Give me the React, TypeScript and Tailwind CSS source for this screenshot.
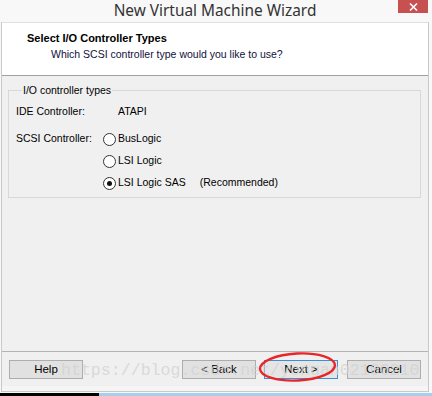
import React from "react";

function Radio({ checked, label }: { checked?: boolean; label: string }) {
  return (
    <div className="flex items-center">
      <div className="w-[13px] h-[13px] rounded-full border border-[#333333] bg-white flex items-center justify-center">
        {checked && <div className="w-[5px] h-[5px] rounded-full bg-[#111111]" />}
      </div>
      <span className="ml-[2px]">{label}</span>
    </div>
  );
}

function Btn({ children, primary }: { children: React.ReactNode; primary?: boolean }) {
  return (
    <div
      className={
        "w-[74px] h-[19px] flex items-center justify-center border text-[11.5px] text-black " +
        (primary ? "border-[#3c8fd9] bg-[#e5e5e5]" : "border-[#adadad] bg-[#e1e1e1]")
      }
    >
      {children}
    </div>
  );
}

export default function App() {
  return (
    <div
      className="relative w-[432px] h-[396px] bg-[#f8f8f8] overflow-hidden text-[10.5px] text-black"
      style={{ fontFamily: '"Liberation Sans", Arial, sans-serif' }}
    >
      {/* Title bar */}
      <div className="relative h-[22px] w-[430px] flex items-center justify-center">
        <span className="text-[15.4px] text-[#333333] leading-none" style={{ fontFamily: '"Noto Sans", "Liberation Sans", sans-serif' }}>
          New Virtual Machine Wizard
        </span>
        <div className="absolute right-[2px] top-0 w-[30px] h-[13px] bg-[#c75050] flex items-center justify-center">
          <svg width="9" height="8" viewBox="0 0 9 8">
            <path d="M1 0.5 L8 7.5 M8 0.5 L1 7.5" stroke="white" strokeWidth="1.6" />
          </svg>
        </div>
      </div>

      {/* Window content */}
      <div className="ml-[1px] w-[428px] border-x border-[#c9c9c9] flex flex-col">
        {/* Header */}
        <div className="h-[54px] bg-white border-t border-[#e0e0e0] border-b border-b-[#a0a0a0] pl-[25px] pt-[9px]">
          <div className="font-bold text-[11px] leading-[13px]">Select I/O Controller Types</div>
          <div className="pl-[24px] mt-[3px] leading-[13px] text-[#10103a]">
            Which SCSI controller type would you like to use?
          </div>
        </div>

        {/* Body */}
        <div className="h-[310px] bg-[#f0f0f0] flex flex-col">
          <fieldset className="ml-[6px] mt-[8px] w-[413px] border border-[#d8d8d8] pl-[7px] pb-[3px]">
            <legend className="ml-[6px] px-[1px] leading-[12px]">I/O controller types</legend>
            <div className="flex items-center h-[16px] mt-[8px]">
              <span className="w-[87px]">IDE Controller:</span>
              <span className="pl-[15px]">ATAPI</span>
            </div>
            <div className="flex mt-[8px]">
              <div className="w-[87px] h-[22px] flex items-center">SCSI Controller:</div>
              <div className="flex flex-col">
                <div className="h-[22px] flex items-center">
                  <Radio label="BusLogic" />
                </div>
                <div className="h-[22px] flex items-center">
                  <Radio label="LSI Logic" />
                </div>
                <div className="h-[22px] flex items-center">
                  <Radio checked label="LSI Logic SAS" />
                  <span className="ml-[14px]">(Recommended)</span>
                </div>
              </div>
            </div>
          </fieldset>

          <div className="flex-1" />

          <div className="border-t border-[#b4b4b4] flex items-start pt-[8px] h-[35px] px-[7px]">
            <Btn>Help</Btn>
            <div className="flex-1" />
            <Btn>&lt; Back</Btn>
            <div className="ml-[8px]">
              <Btn primary>Next &gt;</Btn>
            </div>
            <div className="ml-[9px]">
              <Btn>Cancel</Btn>
            </div>
          </div>
        </div>
      </div>

      {/* Bottom frame + taskbar strip */}
      <div className="h-[6px] ml-[1px] w-[428px] border-x border-b border-[#c9c9c9] bg-[#f5f5f5]" />
      <div className="flex h-[4px] mt-[1px]">
        <div className="w-[99px] bg-black" />
        <div className="flex-1 bg-[#a6cfee]" />
      </div>

      {/* Watermark */}
      <div
        className="absolute left-[61px] top-[361px] text-[16.6px] leading-[20px] text-[#d2d2d2] opacity-75 pointer-events-none"
        style={{ fontFamily: '"Liberation Mono", "Courier New", monospace' }}
      >
        https://blog.csdn.net/yongan02100210
      </div>

      {/* Red annotation ellipse */}
      <svg className="absolute left-[255px] top-[350px]" width="86" height="34" viewBox="0 0 86 34">
        <ellipse cx="42.5" cy="17" rx="37.5" ry="13.5" fill="none" stroke="#e8262a" strokeWidth="2.4" transform="rotate(-3 42.5 17)" />
      </svg>
    </div>
  );
}
